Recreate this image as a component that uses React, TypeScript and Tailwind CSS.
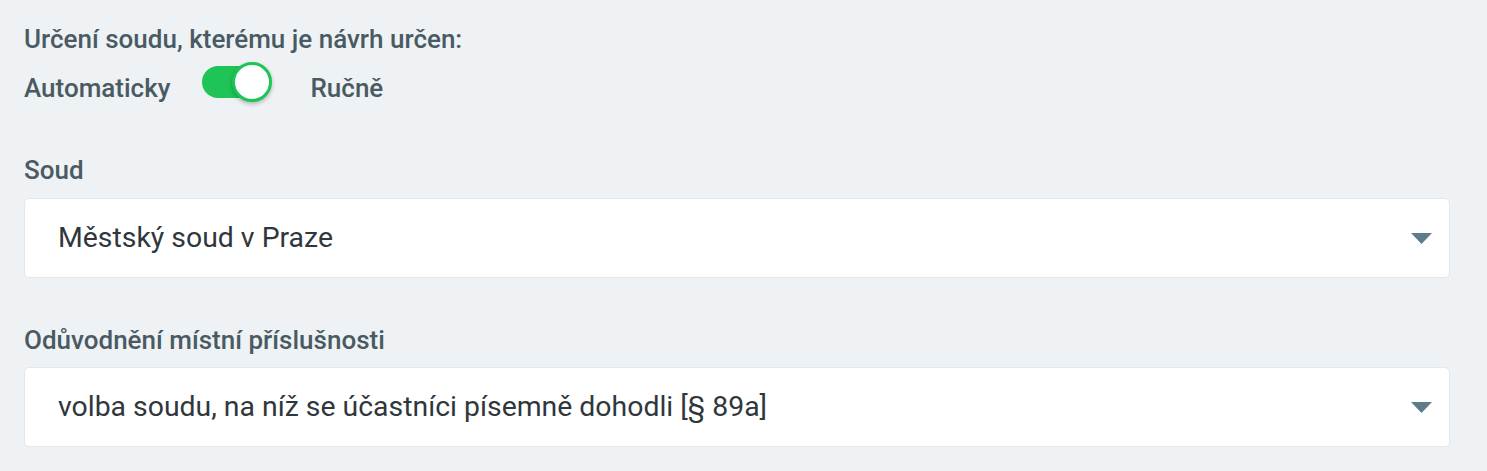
import React from "react";

function Caret() {
  return (
    <svg width="21" height="11" viewBox="0 0 21 11" className="shrink-0">
      <path d="M0 0 L21 0 L10.5 11 Z" fill="#5f7b8c" />
    </svg>
  );
}

function SelectBox({ value }: { value: string }) {
  return (
    <div className="flex h-[80px] w-[1426px] items-center justify-between rounded-[5px] border border-[#e3e8ec] bg-white pl-[33px] pr-[17px]">
      <span className="text-[28.4px] leading-[34px] text-[#2f373c]">{value}</span>
      <Caret />
    </div>
  );
}

export default function App() {
  return (
    <div
      className="min-h-[471px] w-full bg-[#eef2f5] pl-6 pt-[24px]"
      style={{ fontFamily: "Roboto, 'Noto Sans', sans-serif" }}
    >
      <div className="text-[26px] font-medium leading-[30px] text-[#4a5a63]">
        Určení soudu, kterému je návrh určen:
      </div>
      <div className="mt-[8px] flex h-[40px] items-start">
        <span className="mt-[11px] text-[26px] font-medium leading-[30px] text-[#4a5a63]">Automaticky</span>
        <div className="relative ml-[32px] h-[40px] w-[70px]">
          <div className="absolute left-0 top-[4px] h-[32px] w-[60px] rounded-full bg-[#1ec556]" />
          <div className="absolute right-0 top-0 h-[40px] w-[40px] rounded-full border-[3px] border-[#1ec556] bg-white shadow-[0_2px_4px_rgba(0,0,0,0.25)]" />
        </div>
        <span className="ml-[38px] mt-[11px] text-[26px] font-medium leading-[30px] text-[#4a5a63]">Ručně</span>
      </div>
      <div className="mt-[53px] text-[26px] font-medium leading-[30px] text-[#4a5a63]">Soud</div>
      <div className="mt-[13px]">
        <SelectBox value="Městský soud v Praze" />
      </div>
      <div className="mt-[47px] text-[26px] font-medium leading-[30px] text-[#4a5a63]">
        Odůvodnění místní příslušnosti
      </div>
      <div className="mt-[12px]">
        <SelectBox value="volba soudu, na níž se účastníci písemně dohodli [§ 89a]" />
      </div>
    </div>
  );
}
